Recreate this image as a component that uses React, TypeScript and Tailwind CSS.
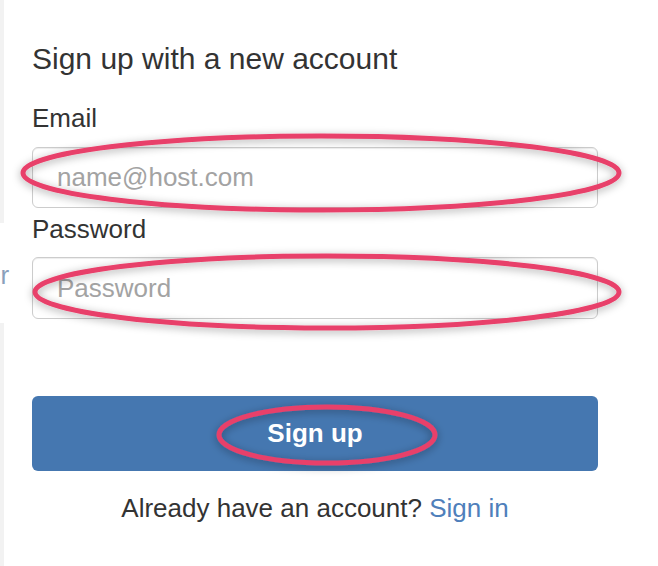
export default function App() {
  return (
    <div
      className="relative flex h-[566px] w-[658px] overflow-hidden bg-white text-[#333]"
      style={{ fontFamily: '"Liberation Sans", Arial, sans-serif' }}
    >
      {/* edge of the neighbouring panel */}
      <div className="flex w-[32px] shrink-0 flex-col">
        <div className="h-[223px] w-[4px] bg-[#f2f2f2]" />
        <div className="flex h-[100px] items-start overflow-hidden">
          <span className="-ml-[14px] mt-[37px] text-[26px] leading-[30px] text-[#8aa0bb]">or</span>
        </div>
        <div className="w-[4px] flex-1 bg-[#f2f2f2]" />
      </div>

      <div className="flex w-[566px] flex-col pt-[42px]">
        <h1 className="text-[30px] leading-[34px] font-normal">Sign up with a new account</h1>

        <label className="mt-[27px] text-[26px] leading-[30px]">Email</label>
        <input
          type="email"
          placeholder="name@host.com"
          className="mt-[14px] h-[61px] w-full rounded-[6px] border border-[#cccccc] px-[24px] text-[26px] text-[#555] shadow-[inset_0_1px_1px_rgba(0,0,0,0.075)] outline-none placeholder:text-[#a3a3a3]"
        />

        <label className="mt-[6px] text-[26px] leading-[30px]">Password</label>
        <input
          type="password"
          placeholder="Password"
          className="mt-[13px] h-[62px] w-full rounded-[6px] border border-[#cccccc] px-[24px] text-[26px] text-[#555] shadow-[inset_0_1px_1px_rgba(0,0,0,0.075)] outline-none placeholder:text-[#a3a3a3]"
        />

        <button className="mt-[77px] h-[75px] w-full rounded-[6px] bg-[#4577b0] text-[26px] font-bold text-white">
          Sign up
        </button>

        <p className="mt-[22px] text-center text-[26px] leading-[30px]">
          Already have an account? <a className="text-[#4f80bb]">Sign in</a>
        </p>
      </div>

      {/* annotation marks */}
      <svg
        className="pointer-events-none absolute inset-0"
        width="658"
        height="566"
        viewBox="0 0 658 566"
      >
        <defs>
          <filter id="sh" x="-10%" y="-50%" width="120%" height="200%">
            <feDropShadow dx="0" dy="2" stdDeviation="4" floodColor="#000" floodOpacity="0.35" />
          </filter>
        </defs>
        <g fill="none" stroke="#e8406a" strokeWidth="5" filter="url(#sh)">
          <ellipse cx="321" cy="173" rx="298" ry="37" />
          <ellipse cx="327" cy="292" rx="292" ry="36" />
          <ellipse cx="327" cy="435" rx="108" ry="28" />
        </g>
      </svg>
    </div>
  );
}
